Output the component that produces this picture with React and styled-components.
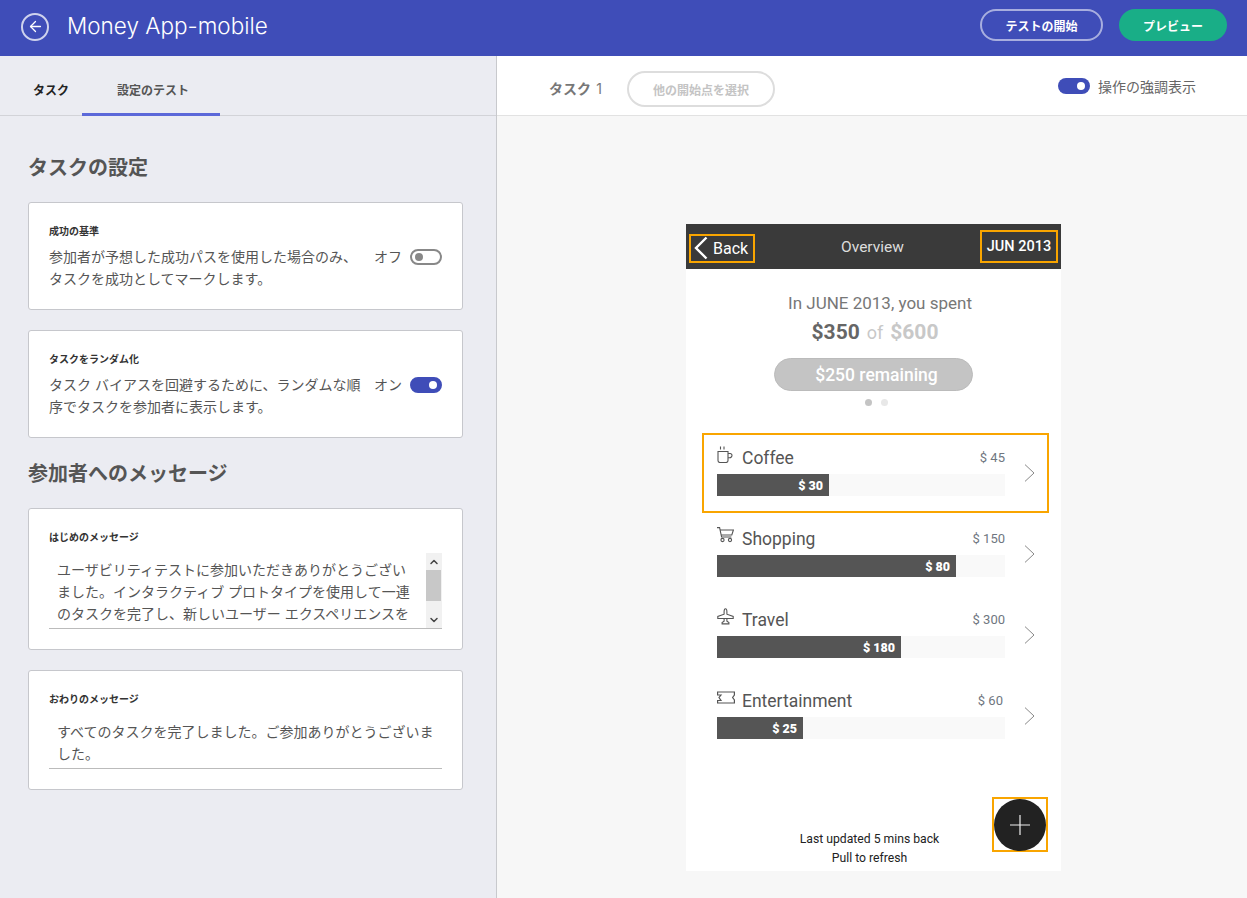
import React from "react";
import styled, { createGlobalStyle } from "styled-components";
import { ArrowLeft, ChevronUp, ChevronDown } from "lucide-react";

const JP = `"Inter", "Noto Sans CJK JP", sans-serif`;
const PHONE = `"Roboto", "Noto Sans", sans-serif`;

const Global = createGlobalStyle`
  html, body { margin: 0; padding: 0; background: #f7f7f7; }
  * { box-sizing: border-box; }
  body { font-family: ${JP}; }
`;

const CoffeeIcon = () => (
  <svg width="16" height="17" viewBox="0 0 16 17" fill="none" stroke="#555" strokeWidth="1.1">
    <path d="M1 5.500h10v9a2 2 0 0 1-2 2H3a2 2 0 0 1-2-2z" />
    <path d="M11 7.500h2.200a1.800 1.800 0 0 1 1.800 1.800v0a2.400 2.400 0 0 1-2.400 2.400H11" />
    <path d="M3.500 .5v3M7 .5v3" />
  </svg>
);

const CartIcon = () => (
  <svg width="17" height="16" viewBox="0 0 17 16" fill="none" stroke="#555" strokeWidth="1.1">
    <path d="M0 .6h2.600l2 9.400h9.800" />
    <path d="M3 3h13.400l-1.600 5H4.100" />
    <circle cx="5.500" cy="13" r="1.600" />
    <circle cx="13" cy="13" r="1.600" />
  </svg>
);

const PlaneIcon = () => (
  <svg width="17" height="17" viewBox="0 0 17 17" fill="none" stroke="#555" strokeWidth="1.1">
    <path d="M8.500 .8c1 0 1.400 1.600 1.400 3v2.400l6.300 2.300v2H.8v-2l6.300-2.300V3.800c0-1.400.4-3 1.400-3z" />
    <path d="M7.100 10.500v2.700l-2 1.400v1.300h6.800v-1.300l-2-1.400v-2.700" />
  </svg>
);

const TicketIcon = () => (
  <svg width="18" height="13" viewBox="0 0 18 13" fill="none" stroke="#555" strokeWidth="1.200">
    <path d="M.6 1h16.800v3l-1.800 2.500 1.800 2.500v3H.6V9.500h3.400L2 6.500l2-2.500H.6z" />
  </svg>
);

const BackChevron = () => (
  <svg width="14" height="24" viewBox="0 0 14 24" fill="none" stroke="#fff" strokeWidth="2.400">
    <path d="M12.500 1.500L2 12l10.500 10.500" />
  </svg>
);

const RowChevron = () => (
  <svg width="11" height="18" viewBox="0 0 11 18" fill="none" stroke="#888" strokeWidth="1">
    <path d="M1 .6L10 9l-9 8.400" />
  </svg>
);

const PlusIcon = () => (
  <svg width="20" height="20" viewBox="0 0 20 20" fill="none" stroke="#eee" strokeWidth="1.200">
    <path d="M10 0v20M0 10h20" />
  </svg>
);

const rows = [
  { name: "Coffee", budget: "$ 45", spent: "$ 30", fill: 112, Icon: CoffeeIcon, marked: true },
  { name: "Shopping", budget: "$ 150", spent: "$ 80", fill: 239, Icon: CartIcon },
  { name: "Travel", budget: "$ 300", spent: "$ 180", fill: 184, Icon: PlaneIcon },
  { name: "Entertainment", budget: "$ 60", spent: "$ 25", fill: 86, Icon: TicketIcon, inset: true },
];

const App = () => {
  return (
    <>
      <Global />
      <Page>
        <TopBar>
          <BackCircle><ArrowLeft size={17} color="#fff" strokeWidth={1.8} /></BackCircle>
          <AppTitle>Money App-mobile</AppTitle>
          <TopActions>
            <OutlineBtn>テストの開始</OutlineBtn>
            <GreenBtn>プレビュー</GreenBtn>
          </TopActions>
        </TopBar>

        <Body>
          <LeftPanel>
            <Tabs>
              <Tab>タスク</Tab>
              <Tab $active>設定のテスト</Tab>
            </Tabs>
            <Settings>
              <SectionTitle>タスクの設定</SectionTitle>
              <Card>
                <CardLabel>成功の基準</CardLabel>
                <CardRow>
                  <CardText>参加者が予想した成功パスを使用した場合のみ、タスクを成功としてマークします。</CardText>
                  <ToggleLabel>オフ</ToggleLabel>
                  <Toggle />
                </CardRow>
              </Card>
              <Card>
                <CardLabel>タスクをランダム化</CardLabel>
                <CardRow>
                  <CardText>タスク バイアスを回避するために、ランダムな順序でタスクを参加者に表示します。</CardText>
                  <ToggleLabel>オン</ToggleLabel>
                  <Toggle $on />
                </CardRow>
              </Card>
              <SectionTitle $second>参加者へのメッセージ</SectionTitle>
              <Card $auto>
                <CardLabel>はじめのメッセージ</CardLabel>
                <MessageBox>
                  <MessageText>ユーザビリティテストに参加いただきありがとうございました。インタラクティブ プロトタイプを使用して一連のタスクを完了し、新しいユーザー エクスペリエンスを</MessageText>
                  <Scrollbar>
                    <ScrollBtn><ChevronUp size={12} color="#444" strokeWidth={3} /></ScrollBtn>
                    <ScrollThumb />
                    <ScrollBtn><ChevronDown size={12} color="#444" strokeWidth={3} /></ScrollBtn>
                  </Scrollbar>
                </MessageBox>
              </Card>
              <Card $auto>
                <CardLabel>おわりのメッセージ</CardLabel>
                <MessageBox $short>
                  <MessageText $wide>すべてのタスクを完了しました。ご参加ありがとうございました。</MessageText>
                </MessageBox>
              </Card>
            </Settings>
          </LeftPanel>

          <RightPanel>
            <Toolbar>
              <TaskName>タスク <TaskNum>1</TaskNum></TaskName>
              <StartPill>他の開始点を選択</StartPill>
              <HighlightWrap>
                <SmallSwitch />
                <HighlightLabel>操作の強調表示</HighlightLabel>
              </HighlightWrap>
            </Toolbar>
            <Canvas>
              <Phone>
                <PhoneHeader>
                  <HotBack>
                    <BackChevron />
                    <span>Back</span>
                  </HotBack>
                  <PhoneTitle>Overview</PhoneTitle>
                  <HotMonth>JUN 2013</HotMonth>
                </PhoneHeader>

                <Summary>
                  <SpentLine>In JUNE 2013, you spent</SpentLine>
                  <Amounts>
                    <AmountMain>$350</AmountMain>
                    <AmountOf>of</AmountOf>
                    <AmountTotal>$600</AmountTotal>
                  </Amounts>
                  <RemainPill>$250 remaining</RemainPill>
                  <Dots>
                    <Dot $active />
                    <Dot />
                  </Dots>
                </Summary>

                <RowList>
                  {rows.map((r) => (
                    <Row key={r.name}>
                      {r.marked && <RowMark />}
                      <RowMain>
                        <RowTop>
                          <IconSlot><r.Icon /></IconSlot>
                          <RowName>{r.name}</RowName>
                          <Budget $inset={r.inset}>{r.budget}</Budget>
                        </RowTop>
                        <Bar>
                          <BarFill style={{ width: r.fill }}>{r.spent}</BarFill>
                        </Bar>
                      </RowMain>
                      <ChevronSlot><RowChevron /></ChevronSlot>
                    </Row>
                  ))}
                </RowList>

                <PhoneFooter>
                  <UpdatedLine>Last updated 5 mins back</UpdatedLine>
                  <UpdatedLine>Pull to refresh</UpdatedLine>
                </PhoneFooter>

                <FabMark>
                  <Fab><PlusIcon /></Fab>
                </FabMark>
              </Phone>
            </Canvas>
          </RightPanel>
        </Body>
      </Page>
    </>
  );
};

export default App;

const Page = styled.div`
  width: 1247px;
  height: 898px;
  overflow: hidden;
  display: flex;
  flex-direction: column;
`;

const TopBar = styled.header`
  height: 56px;
  background: #3f4db8;
  display: flex;
  align-items: center;
  padding: 0 20px 6px 21px;
`;

const BackCircle = styled.div`
  width: 28px;
  height: 28px;
  margin-top: 3px;
  border-radius: 50%;
  border: 2px solid rgba(255, 255, 255, 0.75);
  display: flex;
  align-items: center;
  justify-content: center;
`;

const AppTitle = styled.div`
  margin-left: 18px;
  font-size: 22.5px;
  font-weight: 300;
  color: #fff;
`;

const TopActions = styled.div`
  margin-left: auto;
  display: flex;
  gap: 16px;
`;

const OutlineBtn = styled.div`
  width: 123px;
  height: 32px;
  border-radius: 16px;
  border: 2px solid rgba(255, 255, 255, 0.55);
  color: #fff;
  font-size: 12px;
  font-weight: 700;
  display: flex;
  align-items: center;
  justify-content: center;
`;

const GreenBtn = styled.div`
  width: 108px;
  height: 32px;
  border-radius: 16px;
  background: #19ae87;
  color: #fff;
  font-size: 12px;
  font-weight: 700;
  display: flex;
  align-items: center;
  justify-content: center;
`;

const Body = styled.div`
  flex: 1;
  display: flex;
  min-height: 0;
`;

const LeftPanel = styled.aside`
  width: 497px;
  background: #ebecf2;
  border-right: 1px solid #c8c9cd;
`;

const Tabs = styled.div`
  height: 60px;
  border-bottom: 1px solid #d2d3d8;
  display: flex;
  padding-left: 33px;
`;

const Tab = styled.div`
  height: 60px;
  display: flex;
  align-items: center;
  font-size: 12px;
  font-weight: 700;
  color: ${(p) => (p.$active ? "#555" : "#222")};
  padding-top: 6px;
  ${(p) =>
    p.$active &&
    `
    margin-left: 13px;
    padding: 9px 31px 0 35px;
    border-bottom: 3px solid #5b68d9;
  `}
`;

const Settings = styled.div`
  padding: 0 33px 0 28px;
`;

const SectionTitle = styled.h2`
  margin: ${(p) => (p.$second ? "22px" : "38px")} 0 20px;
  font-size: 20px;
  line-height: 28px;
  font-weight: 700;
  color: #555;
`;

const Card = styled.section`
  background: #fff;
  border: 1px solid #c6c7cc;
  border-radius: 3px;
  padding: 20px 20px 20px;
  margin-bottom: 20px;
  height: ${(p) => (p.$auto ? "auto" : "108px")};
`;

const CardLabel = styled.div`
  font-size: 10px;
  line-height: 16px;
  font-weight: 700;
  color: #333;
`;

const CardRow = styled.div`
  display: flex;
  align-items: flex-start;
  margin-top: 7px;
`;

const CardText = styled.div`
  width: 315px;
  font-size: 14px;
  line-height: 22px;
  color: #555;
`;

const ToggleLabel = styled.div`
  margin-left: 10px;
  width: 36px;
  font-size: 14px;
  line-height: 22px;
  color: #555;
`;

const Toggle = styled.div`
  position: relative;
  margin-top: 3px;
  width: 32px;
  height: 16px;
  border-radius: 8px;
  border: 2px solid ${(p) => (p.$on ? "#3f4db8" : "#888")};
  background: ${(p) => (p.$on ? "#3f4db8" : "#fff")};
  &::after {
    content: "";
    position: absolute;
    top: 2px;
    ${(p) => (p.$on ? "right: 3px;" : "left: 3px;")}
    width: 8px;
    height: 8px;
    border-radius: 50%;
    background: ${(p) => (p.$on ? "#fff" : "#888")};
  }
`;

const MessageBox = styled.div`
  display: flex;
  margin-top: ${(p) => (p.$short ? "6px" : "8px")};
  height: ${(p) => (p.$short ? "56px" : "76px")};
  border-bottom: 1px solid #bbb;
`;

const MessageText = styled.div`
  flex: 1;
  overflow: hidden;
  padding: ${(p) => (p.$wide ? "8px 0 0 8px" : "6px 12px 0 8px")};
  font-size: 14px;
  line-height: 22px;
  color: #555;
`;

const Scrollbar = styled.div`
  width: 16px;
  background: #f1f1f1;
  display: flex;
  flex-direction: column;
  flex-shrink: 0;
`;

const ScrollBtn = styled.div`
  height: 17px;
  display: flex;
  align-items: center;
  justify-content: center;
`;

const ScrollThumb = styled.div`
  height: 31px;
  background: #c8c8c8;
  margin-right: 1px;
  margin-bottom: auto;
`;

const RightPanel = styled.main`
  flex: 1;
  display: flex;
  flex-direction: column;
  background: #f7f7f7;
`;

const Toolbar = styled.div`
  height: 60px;
  background: #fff;
  border-bottom: 1px solid #e2e2e2;
  display: flex;
  align-items: center;
  padding: 7px 51px 0 52px;
`;

const TaskName = styled.div`
  font-size: 14px;
  font-weight: 700;
  color: #777;
  margin-top: -2px;
`;

const TaskNum = styled.span`
  font-weight: 400;
  margin-left: 2px;
`;

const StartPill = styled.div`
  margin-left: 25px;
  width: 148px;
  height: 36px;
  border-radius: 18px;
  border: 2px solid #ddd;
  color: #c4c4c4;
  font-size: 12px;
  font-weight: 700;
  display: flex;
  align-items: center;
  justify-content: center;
`;

const HighlightWrap = styled.div`
  margin-left: auto;
  margin-top: -7px;
  display: flex;
  align-items: center;
  gap: 8px;
`;

const SmallSwitch = styled.div`
  position: relative;
  width: 32px;
  height: 16px;
  border-radius: 8px;
  background: #3f4db8;
  &::after {
    content: "";
    position: absolute;
    top: 4px;
    right: 5px;
    width: 8px;
    height: 8px;
    border-radius: 50%;
    background: #fff;
  }
`;

const HighlightLabel = styled.div`
  font-size: 14px;
  color: #666;
`;

const Canvas = styled.div`
  flex: 1;
  padding: 108px 0 0 189px;
`;

const Phone = styled.div`
  position: relative;
  width: 375px;
  height: 647px;
  background: #fff;
  display: flex;
  flex-direction: column;
  font-family: ${PHONE};
`;

const PhoneHeader = styled.div`
  height: 45px;
  background: #3a3a3a;
  display: flex;
  align-items: center;
  justify-content: space-between;
  padding: 0 3px;
  color: #fff;
`;

const HotBack = styled.div`
  width: 66px;
  height: 29px;
  margin-top: 3px;
  border: 2px solid #f9a500;
  display: flex;
  align-items: center;
  gap: 5px;
  padding-left: 3px;
  font-size: 16px;
`;

const PhoneTitle = styled.div`
  font-size: 15.500px;
  color: #ddd;
  margin-left: 10px;
`;

const HotMonth = styled.div`
  width: 78px;
  height: 33px;
  border: 2px solid #f9a500;
  display: flex;
  align-items: center;
  justify-content: center;
  font-size: 14.500px;
  font-weight: 500;
`;

const Summary = styled.div`
  display: flex;
  flex-direction: column;
  align-items: center;
  padding-top: 22px;
  height: 164px;
`;

const SpentLine = styled.div`
  font-size: 17px;
  line-height: 24px;
  color: #777;
  margin-left: 13px;
`;

const Amounts = styled.div`
  display: flex;
  align-items: baseline;
  gap: 7px;
  margin: 2px 0 0 3px;
  line-height: 30px;
`;

const AmountMain = styled.span`
  font-size: 21px;
  font-weight: 700;
  color: #666;
`;

const AmountOf = styled.span`
  font-size: 18px;
  color: #c8c8c8;
`;

const AmountTotal = styled.span`
  font-size: 21px;
  font-weight: 700;
  color: #c8c8c8;
`;

const RemainPill = styled.div`
  width: 199px;
  height: 33px;
  margin-top: 10px;
  padding-left: 6px;
  border-radius: 17px;
  border: 1px solid #bbb;
  background: #c4c4c4;
  color: #fff;
  font-size: 17.500px;
  font-weight: 500;
  display: flex;
  align-items: center;
  justify-content: center;
`;

const Dots = styled.div`
  display: flex;
  gap: 9px;
  margin: 8px 0 0 6px;
`;

const Dot = styled.div`
  width: 7px;
  height: 7px;
  border-radius: 50%;
  background: ${(p) => (p.$active ? "#c4c4c4" : "#e8e8e8")};
`;

const RowList = styled.div`
  display: flex;
  flex-direction: column;
`;

const Row = styled.div`
  position: relative;
  height: 81px;
  padding: 11px 26px 0 31px;
  display: flex;
`;

const RowMark = styled.div`
  position: absolute;
  left: 16px;
  top: 0;
  width: 347px;
  height: 80px;
  border: 2px solid #f9a500;
  pointer-events: none;
`;

const RowMain = styled.div`
  width: 288px;
`;

const RowTop = styled.div`
  height: 30px;
  display: flex;
  align-items: center;
`;

const IconSlot = styled.div`
  width: 25px;
  height: 24px;
  margin-top: -10px;
  display: flex;
  align-items: center;
`;

const RowName = styled.div`
  font-size: 17.500px;
  margin-top: -2px;
  color: #555;
`;

const Budget = styled.div`
  margin-left: auto;
  margin-right: ${(p) => (p.$inset ? "2px" : "0")};
  margin-top: -4px;
  font-size: 13px;
  color: #6f7680;
`;

const Bar = styled.div`
  height: 22px;
  background: #f9f9f9;
`;

const BarFill = styled.div`
  height: 22px;
  background: #555;
  color: #fff;
  font-size: 12.500px;
  font-weight: 900;
  display: flex;
  align-items: center;
  justify-content: flex-end;
  padding-right: 6px;
`;

const ChevronSlot = styled.div`
  width: 30px;
  margin-top: 20px;
  padding-left: 19px;
`;

const PhoneFooter = styled.div`
  margin-top: auto;
  padding: 0 8px 3px 0;
  display: flex;
  flex-direction: column;
  align-items: center;
`;

const UpdatedLine = styled.div`
  font-size: 12.200px;
  line-height: 19px;
  color: #222;
`;

const FabMark = styled.div`
  position: absolute;
  left: 306px;
  top: 573px;
  width: 56px;
  height: 55px;
  border: 2px solid #f9a500;
  display: flex;
  align-items: center;
  justify-content: center;
`;

const Fab = styled.div`
  width: 52px;
  height: 52px;
  border-radius: 50%;
  background: #222;
  display: flex;
  align-items: center;
  justify-content: center;
  flex-shrink: 0;
`;
